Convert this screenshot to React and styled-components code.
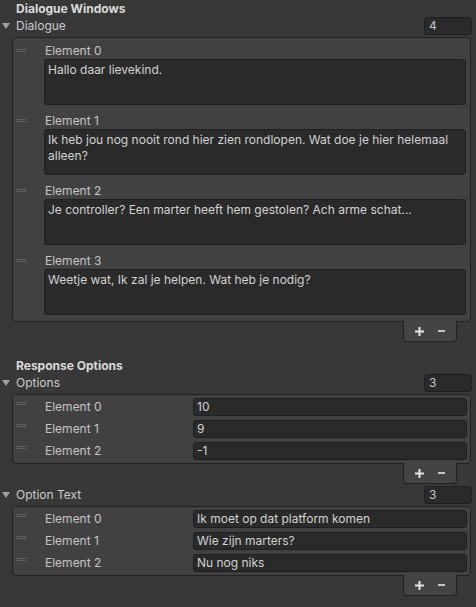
import React from 'react'
import styled, { createGlobalStyle } from 'styled-components'

const DIALOGUE = [
  'Hallo daar lievekind.',
  'Ik heb jou nog nooit rond hier zien rondlopen. Wat doe je hier helemaal alleen?',
  'Je controller? Een marter heeft hem gestolen? Ach arme schat...',
  'Weetje wat, Ik zal je helpen. Wat heb je nodig?',
]

const OPTIONS = ['10', '9', '-1']

const OPTION_TEXT = ['Ik moet op dat platform komen', 'Wie zijn marters?', 'Nu nog niks']

const GlobalStyle = createGlobalStyle`
  html, body {
    margin: 0;
    padding: 0;
    background: #383838;
  }

  body {
    font-family: Inter, "Noto Sans", sans-serif;
    font-size: 12px;
    color: #d2d2d2;
  }
`

const Plus = () => (
  <svg width="9" height="9" viewBox="0 0 9 9">
    <rect x="0" y="3.5" width="9" height="2" fill="#e6e6e6" />
    <rect x="3.5" y="0" width="2" height="9" fill="#e6e6e6" />
  </svg>
)

const Minus = () => (
  <svg width="7" height="2" viewBox="0 0 7 2">
    <rect x="0" y="0" width="7" height="2" fill="#c4c4c4" />
  </svg>
)

const Foldout = ({ label, count, spaced }) => (
  <FoldoutRow $spaced={spaced}>
    <Arrow />
    <FoldoutLabel>{label}</FoldoutLabel>
    <CountField>{count}</CountField>
  </FoldoutRow>
)

const ListFooter = () => (
  <Footer>
    <FooterButton>
      <Plus />
    </FooterButton>
    <FooterButton>
      <Minus />
    </FooterButton>
  </Footer>
)

const FieldList = ({ values }) => (
  <Panel $compact>
    {values.map((value, i) => (
      <FieldRow key={i}>
        <Handle $offset={4} />
        <RowLabel>Element {i}</RowLabel>
        <Field>{value}</Field>
      </FieldRow>
    ))}
  </Panel>
)

const App = () => {
  return (
    <Page>
      <GlobalStyle />

      <Header>Dialogue Windows</Header>
      <Foldout label="Dialogue" count={4} />
      <Panel>
        {DIALOGUE.map((text, i) => (
          <TextElement key={i}>
            <Handle $offset={7} />
            <ElementBody>
              <ElementLabel>Element {i}</ElementLabel>
              <TextArea>{text}</TextArea>
            </ElementBody>
          </TextElement>
        ))}
      </Panel>
      <ListFooter />

      <Header $spaced>Response Options</Header>
      <Foldout label="Options" count={3} />
      <FieldList values={OPTIONS} />
      <ListFooter />

      <Foldout label="Option Text" count={3} spaced />
      <FieldList values={OPTION_TEXT} />
      <ListFooter />
    </Page>
  )
}

export default App

const Page = styled.div`
  display: flex;
  flex-direction: column;

  width: 476px;
  min-height: 607px;
  padding-top: 1px;
  box-sizing: border-box;
`

const Header = styled.div`
  height: 16px;
  margin-top: ${p => (p.$spaced ? '16px' : '0')};
  padding-left: 16px;

  color: #dadada;
  font-weight: 700;
  line-height: 16px;
`

const FoldoutRow = styled.div`
  display: flex;
  align-items: center;

  height: 18px;
  margin-top: ${p => (p.$spaced ? '2px' : '0')};
  padding-right: 4px;
`

const Arrow = styled.span`
  width: 0;
  height: 0;
  margin-left: 2px;
  border-left: 4px solid transparent;
  border-right: 4px solid transparent;
  border-top: 6px solid #a0a0a0;
`

const FoldoutLabel = styled.span`
  flex: 1;
  margin-left: 6px;

  color: #cbcbcb;
  line-height: 18px;
`

const CountField = styled.div`
  width: 48px;
  height: 18px;
  padding-left: 4px;
  box-sizing: border-box;
  border: 1px solid #202020;
  border-radius: 3px;

  background: #2a2a2a;
  color: #c4c4c4;
  line-height: 16px;
`

const Panel = styled.div`
  display: flex;
  flex-direction: column;
  gap: ${p => (p.$compact ? '4px' : '7px')};

  margin: 2px 5px 0 12px;
  padding: ${p => (p.$compact ? '3px 0 3px' : '4px 0 6px')};
  border: 1px solid #222222;
  border-radius: 4px;

  background: #414141;
`

const TextElement = styled.div`
  display: flex;
  align-items: flex-start;
`

const Handle = styled.div`
  flex: none;
  width: 10px;
  height: 1px;
  margin: ${p => p.$offset}px 18px 0 3px;
  border-top: 1px solid #5e5e5e;
  border-bottom: 1px solid #5e5e5e;
`

const ElementBody = styled.div`
  display: flex;
  flex-direction: column;
  flex: 1;

  margin-right: 4px;
`

const ElementLabel = styled.div`
  height: 17px;
  padding-left: 1px;

  color: #c4c4c4;
  line-height: 17px;
`

const TextArea = styled.div`
  height: 46px;
  padding: 2px 3px;
  box-sizing: border-box;
  border: 1px solid #202020;
  border-radius: 3px;

  background: #2a2a2a;
  color: #d2d2d2;
  line-height: 16px;
`

const FieldRow = styled.div`
  display: flex;
  align-items: flex-start;

  height: 18px;
`

const RowLabel = styled.div`
  width: 149px;
  padding-left: 1px;
  box-sizing: border-box;

  color: #c4c4c4;
  line-height: 18px;
`

const Field = styled.div`
  flex: 1;
  height: 18px;
  margin-right: 3px;
  padding-left: 3px;
  box-sizing: border-box;
  border: 1px solid #202020;
  border-radius: 3px;

  background: #2a2a2a;
  color: #d2d2d2;
  line-height: 16px;
`

const Footer = styled.div`
  display: flex;
  align-items: center;
  align-self: flex-end;
  gap: 13px;

  width: 54px;
  height: 21px;
  margin: -1px 19px 0 0;
  padding-left: 11px;
  box-sizing: border-box;
  border: 1px solid #222222;
  border-top: none;
  border-radius: 0 0 4px 4px;

  background: #444444;
`

const FooterButton = styled.span`
  display: flex;
  align-items: center;
  justify-content: center;

  width: 9px;
  height: 9px;
`
